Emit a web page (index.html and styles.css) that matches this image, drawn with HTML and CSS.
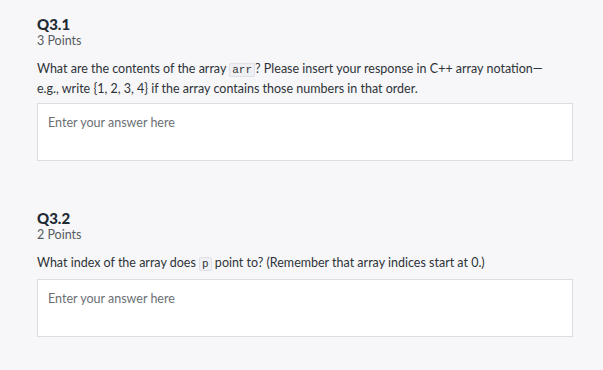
FILE: index.html
```html
<!DOCTYPE html>
<html>
<head>
<meta charset="utf-8">
<link rel="stylesheet" href="styles.css">
</head>
<body>
<main class="page">
  <section class="question">
    <h2 class="q-title">Q3.1</h2>
    <div class="q-points">3 Points</div>
    <p class="q-text">What are the contents of the array <code class="code">arr</code>? Please insert your response in C++ array notation—<br>e.g., write {1, 2, 3, 4} if the array contains those numbers in that order.</p>
    <div class="answer">Enter your answer here</div>
  </section>
  <section class="question">
    <h2 class="q-title">Q3.2</h2>
    <div class="q-points">2 Points</div>
    <p class="q-text">What index of the array does <code class="code">p</code> point to? (Remember that array indices start at 0.)</p>
    <div class="answer">Enter your answer here</div>
  </section>
</main>
</body>
</html>
```

FILE: styles.css
```css
html, body {
  margin: 0;
  padding: 0;
  background: #f7f7f9;
}
body {
  font-family: Lato, "Open Sans", "Liberation Sans", sans-serif;
  color: #2e3338;
}
.page {
  padding: 16px 30px 0 37px;
  display: flex;
  flex-direction: column;
  gap: 49px;
}
.question {
  display: flex;
  flex-direction: column;
}
.q-title {
  margin: 0;
  font-size: 15px;
  font-weight: 900;
  line-height: 17px;
  color: #1f2a33;
}
.q-points {
  font-size: 12.5px;
  line-height: 15px;
  color: #555b61;
}
.q-text {
  margin: 12px 0 0;
  font-size: 12.5px;
  line-height: 18.5px;
  color: #2e3338;
}
.code {
  font-family: "Liberation Mono", "DejaVu Sans Mono", monospace;
  font-size: 11px;
  background: #eff0f3;
  border: 1px solid #dfe1e6;
  border-radius: 2px;
  padding: 0 2px;
  color: #333;
}
.answer {
  margin-top: 5px;
  height: 58px;
  box-sizing: border-box;
  background: #fff;
  border: 1px solid #dcdde3;
  padding: 11px 10px;
  font-size: 12.5px;
  color: #6b7075;
  width: 536px;
}
```
